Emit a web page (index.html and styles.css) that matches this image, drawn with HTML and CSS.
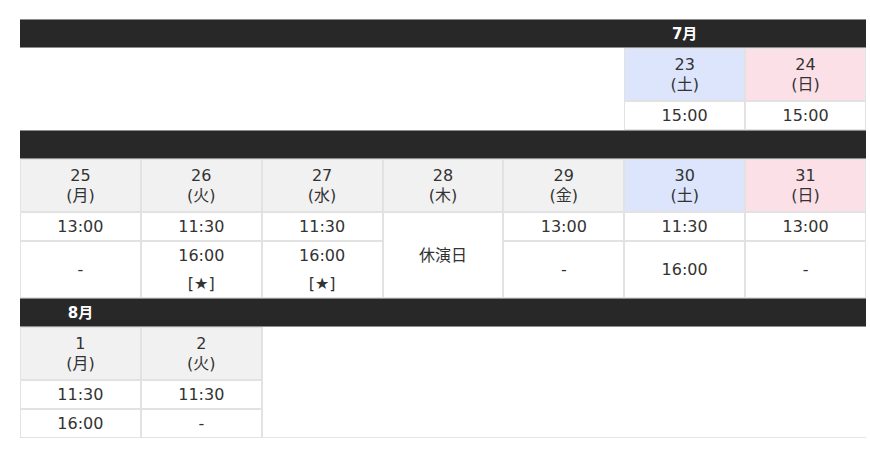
FILE: index.html
```html
<!DOCTYPE html>
<html lang="ja">
<head>
<meta charset="utf-8">
<title>公演スケジュール</title>
<link rel="stylesheet" href="styles.css">
</head>
<body>
<table class="schedule">
  <colgroup>
    <col><col><col><col><col><col><col>
  </colgroup>
  <tbody>
    <tr class="bar">
      <td></td><td></td><td></td><td></td><td></td><td class="month">7月</td><td></td>
    </tr>
    <tr>
      <td class="blank" colspan="5" rowspan="2"></td>
      <td class="day sat">23<br>(土)</td>
      <td class="day sun">24<br>(日)</td>
    </tr>
    <tr>
      <td class="time">15:00</td>
      <td class="time">15:00</td>
    </tr>
    <tr class="bar">
      <td></td><td></td><td></td><td></td><td></td><td></td><td></td>
    </tr>
    <tr>
      <td class="day">25<br>(月)</td>
      <td class="day">26<br>(火)</td>
      <td class="day">27<br>(水)</td>
      <td class="day">28<br>(木)</td>
      <td class="day">29<br>(金)</td>
      <td class="day sat">30<br>(土)</td>
      <td class="day sun">31<br>(日)</td>
    </tr>
    <tr>
      <td class="time">13:00</td>
      <td class="time">11:30</td>
      <td class="time">11:30</td>
      <td class="time closed" rowspan="2">休演日</td>
      <td class="time">13:00</td>
      <td class="time">11:30</td>
      <td class="time">13:00</td>
    </tr>
    <tr>
      <td class="time">-</td>
      <td class="time">16:00<div class="mark">[★]</div></td>
      <td class="time">16:00<div class="mark">[★]</div></td>
      <td class="time">-</td>
      <td class="time">16:00</td>
      <td class="time">-</td>
    </tr>
    <tr class="bar">
      <td class="month">8月</td><td></td><td></td><td></td><td></td><td></td><td></td>
    </tr>
    <tr>
      <td class="day">1<br>(月)</td>
      <td class="day">2<br>(火)</td>
      <td class="blank tail" colspan="5" rowspan="3"></td>
    </tr>
    <tr>
      <td class="time">11:30</td>
      <td class="time">11:30</td>
    </tr>
    <tr>
      <td class="time">16:00</td>
      <td class="time">-</td>
    </tr>
  </tbody>
</table>
</body>
</html>
```

FILE: styles.css
```css
html, body {
  margin: 0;
  padding: 0;
  background: #ffffff;
}

body {
  padding: 19px 4px 0 20px;
  font-family: "DejaVu Sans", Verdana, "Noto Sans CJK JP", sans-serif;
  color: #333333;
}

.schedule {
  width: 846px;
  table-layout: fixed;
  border-collapse: separate;
  border-spacing: 0;
  font-size: 16px;
  line-height: 20px;
}

.schedule td {
  text-align: center;
  vertical-align: middle;
  padding: 0;
}

.schedule .bar td {
  background: #282828;
  height: 27px;
  border-top: 1px solid #8c8c8c;
  border-bottom: 1px solid #8c8c8c;
  color: #ffffff;
}

.schedule .bar .month {
  font-weight: bold;
  font-size: 15px;
}

.schedule .day,
.schedule .time {
  border: 1px solid #e2e2e2;
}

.schedule .day {
  background: #f1f1f1;
  padding: 6px 0 5px;
}

.schedule .day.sat {
  background: #dce5fb;
}

.schedule .day.sun {
  background: #fbe1e7;
}

.schedule .time {
  background: #ffffff;
  padding: 4px 0 3px;
}

.mark {
  margin-top: 8px;
}

.schedule .blank {
  background: #ffffff;
  border: none;
}

.schedule .blank.tail {
  border-left: 1px solid #e2e2e2;
  border-bottom: 1px solid #e6e6e6;
}
```
